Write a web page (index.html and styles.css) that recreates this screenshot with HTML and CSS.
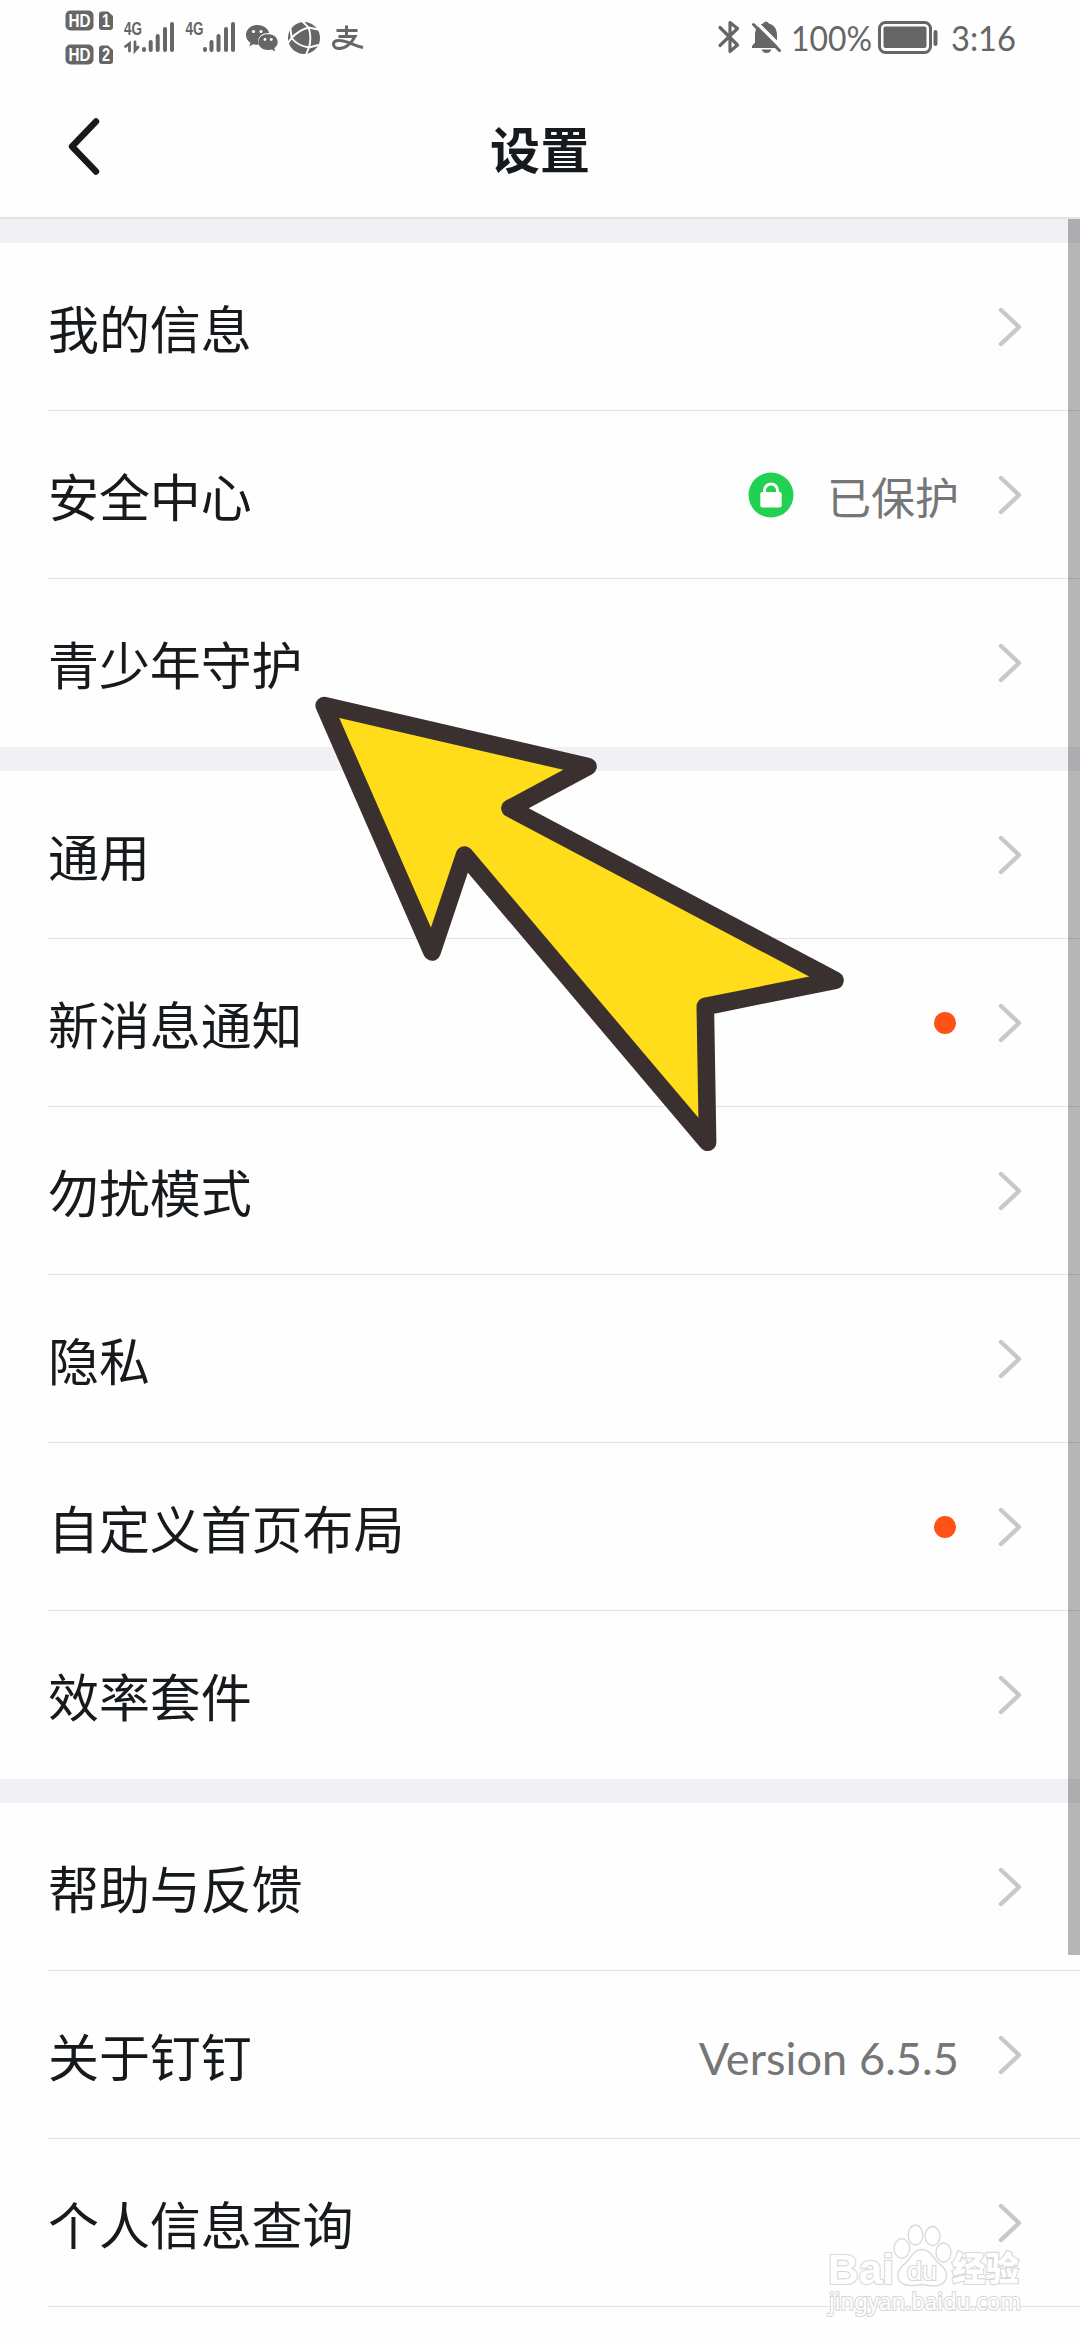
FILE: index.html
```html
<!DOCTYPE html>
<html lang="zh-CN">
<head>
<meta charset="utf-8">
<title>设置</title>
<link rel="stylesheet" href="styles.css">
</head>
<body>
<svg class="defs" width="0" height="0">
  <symbol id="chevron" viewBox="0 0 26 40"><path d="M4 3 22 20 4 37" fill="none" stroke="#c8c8c8" stroke-width="4.4" stroke-linecap="round" stroke-linejoin="round"/></symbol>
</svg>
<header class="status">
  <svg class="status-left" width="320" height="76" viewBox="50 0 320 76">
    <g fill="#666">
      <rect x="65.500" y="10.500" width="28" height="20" rx="5"/>
      <path d="M102 11.500h6l5 4.500v11q0 3-3 3h-8q-3 0-3-3V14.500q0-3 3-3z"/>
      <rect x="65.500" y="44.500" width="28" height="20" rx="5"/>
      <path d="M102 45.500h6l5 4.500v11q0 3-3 3h-8q-3 0-3-3V48.500q0-3 3-3z"/>
    </g>
    <g class="badge-text">
      <text x="68.500" y="27" textLength="22" lengthAdjust="spacingAndGlyphs">HD</text>
      <text x="102" y="27" textLength="8" lengthAdjust="spacingAndGlyphs">1</text>
      <text x="68.500" y="61" textLength="22" lengthAdjust="spacingAndGlyphs">HD</text>
      <text x="102" y="61" textLength="8" lengthAdjust="spacingAndGlyphs">2</text>
    </g>
    <g class="net-text">
      <text x="124" y="35" textLength="18" lengthAdjust="spacingAndGlyphs">4G</text>
      <text x="185.500" y="35" textLength="18" lengthAdjust="spacingAndGlyphs">4G</text>
    </g>
    <g stroke="#666" stroke-width="4" stroke-linecap="round" fill="none">
      <path d="M144 49v1M150.700 42v8M157.700 36v14M165 29v21M172 24v26"/>
      <path d="M205 49v1M211.500 42v8M218.500 36v14M226 29v21M233 24v26"/>
      <path d="M125.500 46.500 129.500 43.500V51M135 42v8.500L138 47" stroke-width="2.800"/>
    </g>
    <path fill="#666" d="M257.500 25c-6.500 0-11.500 4.300-11.500 10 0 3.200 1.600 6 4.400 7.800L249.300 46.500l4-2.300q2 .6 4.500.6l1-.1c-2.600-7 3-12.200 10.500-11.700C267.700 28 263 25 257.500 25z"/>
    <path fill="#666" d="M268 34c-5.600 0-9.600 3.600-9.600 8.100s4 8 9.600 8q2 0 3.800-.6l3.400 1.900-.9-3.200c2-1.500 3.400-3.700 3.400-6.100 0-4.500-4.100-8.100-9.700-8.100z"/>
    <g fill="#fff"><circle cx="253.500" cy="31.500" r="1.600"/><circle cx="261" cy="31.500" r="1.600"/><circle cx="265" cy="39.500" r="1.400"/><circle cx="271.300" cy="39.500" r="1.400"/></g>
    <circle cx="304" cy="38" r="16" fill="#666"/>
    <path d="M308.500 27.500Q299 30 291.500 38Q298 46 309 47.500Q312 37 308.500 27.500M308.500 27.500 302 21M308.500 27.500 318 29.500M291.500 38 290.500 28M291.500 38 288 43M309 47.500 318.500 45M309 47.500 306 54.500" fill="none" stroke="#fff" stroke-width="1.900"/>
    <path d="M336.500 30.500H357.500M346.500 25.500V36.500M338.500 36.500H355C352 42 346 49 338.500 48.500 332 48 331.500 40.500 339 40.500 347 40.500 354 45.500 363 47.500" fill="none" stroke="#666" stroke-width="3"/>
  </svg>
  <div class="status-right">
    <svg width="24" height="36" viewBox="716 19 24 36"><path d="M719 27.500 736.500 45 729 51.500V22.500L736.500 28.500 719 45.500" fill="none" stroke="#666" stroke-width="3.200" stroke-linecap="round" stroke-linejoin="round"/></svg>
    <svg class="bell" width="32" height="36" viewBox="749 19 32 36"><path fill="#666" d="M751 48v-2l3-3.500V35c0-6 3-10 8-11.500Q765 19.500 768 23.500c5 1.500 8 5.500 8 11.500v9l1 4zM760.500 49.500h10q-1.500 3.500-5 3.500t-5-3.500z"/><path d="M754 21 782 49" stroke="#fff" stroke-width="3.500"/><path d="M752.500 24.500 778.500 50.500" stroke="#666" stroke-width="3" stroke-linecap="round"/></svg>
    <svg width="82" height="40" viewBox="0 0 82 40"><text class="clock" x="0" y="32" textLength="81" lengthAdjust="spacingAndGlyphs">100%</text></svg>
    <svg class="battery" width="60" height="34" viewBox="0 0 60 34"><rect x="1.500" y="2.500" width="51" height="30" rx="6" fill="none" stroke="#666" stroke-width="3"/><rect x="5.500" y="6.500" width="43" height="21.500" rx="2" fill="#666"/><path d="M57.500 12v12" stroke="#666" stroke-width="4" stroke-linecap="round"/></svg>
    <svg width="66" height="40" viewBox="0 0 66 40"><text class="clock" x="0" y="32" textLength="65" lengthAdjust="spacingAndGlyphs">3:16</text></svg>
  </div>
</header>
<nav class="nav">
  <svg class="back" width="36" height="60" viewBox="0 0 36 60"><path d="M30 4.500 6 29.500 30 54.500" fill="none" stroke="#171a1d" stroke-width="6.400" stroke-linecap="round" stroke-linejoin="round"/></svg>
  <h1 class="title">设置</h1>
</nav>
<main class="groups">
  <section class="group">
    <div class="row"><span class="label">我的信息</span><svg class="chev"><use href="#chevron"/></svg></div>
    <div class="row"><span class="label">安全中心</span>
      <svg class="lock" width="46" height="46" viewBox="0 0 46 46"><circle cx="23" cy="23" r="22.500" fill="#22d052"/><rect x="12.300" y="20" width="21.400" height="15.500" rx="2" fill="#fff"/><path d="M16.500 21v-2.500a6.500 6.500 0 0 1 13 0V21" fill="none" stroke="#fff" stroke-width="3"/></svg>
      <span class="value">已保护</span><svg class="chev"><use href="#chevron"/></svg></div>
    <div class="row"><span class="label">青少年守护</span><svg class="chev"><use href="#chevron"/></svg></div>
  </section>
  <section class="group">
    <div class="row"><span class="label">通用</span><svg class="chev"><use href="#chevron"/></svg></div>
    <div class="row"><span class="label">新消息通知</span><i class="dot"></i><svg class="chev"><use href="#chevron"/></svg></div>
    <div class="row"><span class="label">勿扰模式</span><svg class="chev"><use href="#chevron"/></svg></div>
    <div class="row"><span class="label">隐私</span><svg class="chev"><use href="#chevron"/></svg></div>
    <div class="row"><span class="label">自定义首页布局</span><i class="dot"></i><svg class="chev"><use href="#chevron"/></svg></div>
    <div class="row"><span class="label">效率套件</span><svg class="chev"><use href="#chevron"/></svg></div>
  </section>
  <section class="group group-open">
    <div class="row"><span class="label">帮助与反馈</span><svg class="chev"><use href="#chevron"/></svg></div>
    <div class="row"><span class="label">关于钉钉</span><span class="value version">Version 6.5.5</span><svg class="chev"><use href="#chevron"/></svg></div>
    <div class="row"><span class="label">个人信息查询</span><svg class="chev"><use href="#chevron"/></svg></div>
  </section>
  <div class="scrollbar"></div>
</main>
<svg class="pointer" width="560" height="480" viewBox="300 685 560 480"><path d="M324.200 705.500 588 766.500 510 808.300 835 980.300 705.300 1006.500 707.600 1142.300 464.500 855 432 952Z" fill="#ffdd1a" stroke="#3a3030" stroke-width="17.600" stroke-linejoin="round"/></svg>
<svg class="watermark" width="210" height="100" viewBox="820 2220 210 100">
  <g fill="#fff" stroke="#d8d8d8" stroke-width="1.300">
    <ellipse cx="901.800" cy="2248.500" rx="7.800" ry="9.800"/><ellipse cx="915.500" cy="2235" rx="7.300" ry="10"/><ellipse cx="932.500" cy="2236" rx="7.500" ry="9.500"/><ellipse cx="943.500" cy="2252.500" rx="7.500" ry="9.500"/>
    <path d="M922 2249.500c-9 0-11 9-17 14-5 4-8 8-7 14 2 9 13 9 24 7 11 2 21 3 24-6 2-7-2-11-7-15-6-5-8-14-17-14z"/>
  </g>
  <g class="wm-text">
    <text class="wm-latin" x="828" y="2284" font-size="43" textLength="66" lengthAdjust="spacingAndGlyphs">Bai</text>
    <text class="wm-du" x="907" y="2280" font-size="26" textLength="30" lengthAdjust="spacingAndGlyphs">du</text>
    <text class="wm-cjk" x="952" y="2281" font-size="34" textLength="67" lengthAdjust="spacingAndGlyphs">经验</text>
    <text class="wm-url" x="829" y="2310" font-size="23" textLength="192" lengthAdjust="spacingAndGlyphs">jingyan.baidu.com</text>
  </g>
</svg>
</body>
</html>
```
FILE: styles.css
```css
* { box-sizing: border-box; }
body {
  position: relative;
  margin: 0;
  width: 1080px;
  height: 2340px;
  overflow: hidden;
  background: #fefefe;
  color: #171a1d;
  font-family: "Noto Sans CJK SC", sans-serif;
}
svg { display: block; flex: none; overflow: visible; }
.defs { position: absolute; }

.status {
  display: flex;
  justify-content: space-between;
  height: 76px;
  padding: 0 63px 0 50px;
}
.status-right { display: flex; align-items: flex-start; padding-top: 19px; }
.status-right .bell { margin-left: 9px; margin-right: 9px; }
.battery { margin: 1px 13px 0 5px; }
.clock { font: 34.500px Lato, sans-serif; fill: #666; }
.badge-text { font: bold 18px "Liberation Sans", sans-serif; fill: #fff; }
.net-text { font: bold 19px "Liberation Sans", sans-serif; fill: #666; }

.nav {
  display: grid;
  grid-template-columns: 200px 1fr 200px;
  align-items: center;
  height: 143px;
  border-bottom: 2px solid #e3e4e5;
}
.back { margin-left: 66px; }
.title { margin: 1px 0 0; font-size: 50px; line-height: 60px; font-weight: 700; text-align: center; }

.groups { position: relative; padding-top: 24px; background: #f1f0f5; }
.group { margin-bottom: 24px; padding-left: 48px; background: #fefefe; }
.group-open { margin-bottom: 0; padding-bottom: 33px; }
.row {
  display: flex;
  align-items: center;
  height: 168px;
  padding-right: 57px;
  border-bottom: 1px solid #e2e3e4;
}
.group:not(.group-open) .row:last-child { border-bottom-color: transparent; }
.label { flex: 1; font-size: 51px; line-height: 70px; letter-spacing: -0.100px; }
.value { margin-right: 38px; font-size: 44px; line-height: 60px; color: #747677; padding-top: 2px; }
.version { font-family: Lato, sans-serif; font-size: 45px; letter-spacing: 0.100px; padding-top: 6px; }
.chev { width: 26px; height: 40px; }
.lock { margin-right: 33px; }
.dot { width: 22px; height: 22px; margin-right: 41px; border-radius: 50%; background: #ff5219; }
.scrollbar {
  position: absolute;
  top: 0;
  right: 0;
  width: 12px;
  height: 1736px;
  background: rgba(20, 23, 27, .31);
}

.pointer { position: absolute; left: 300px; top: 685px; }
.watermark { position: absolute; left: 820px; top: 2220px; }
.wm-text { fill: #fff; stroke: #d8d8d8; stroke-width: 2.200px; paint-order: stroke; }
.wm-latin { font-family: "Liberation Sans", sans-serif; font-weight: 700; }
.wm-du { font-family: "Liberation Sans", sans-serif; }
.wm-cjk { font-family: "Noto Sans CJK SC", sans-serif; font-weight: 900; }
.wm-url { font-family: "Noto Sans", sans-serif; }
```
